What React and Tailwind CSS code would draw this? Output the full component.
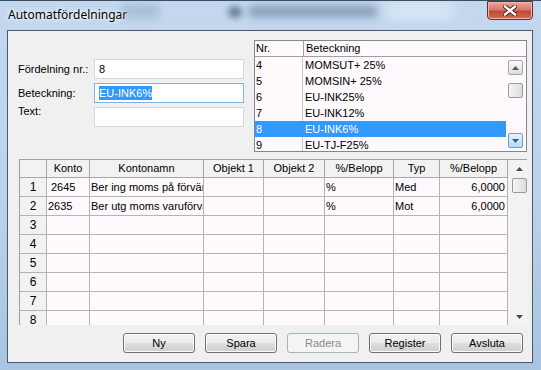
import React from 'react';

const listRows = [
  ['4', 'MOMSUT+ 25%'],
  ['5', 'MOMSIN+ 25%'],
  ['6', 'EU-INK25%'],
  ['7', 'EU-INK12%'],
  ['8', 'EU-INK6%'],
  ['9', 'EU-TJ-F25%'],
];

const colW = ['w-[27px]', 'w-[43px]', 'w-[114px]', 'w-[60px]', 'w-[61px]', 'w-[69px]', 'w-[46px]', 'w-[68px]'];
const headers = ['', 'Konto', 'Kontonamn', 'Objekt 1', 'Objekt 2', '%/Belopp', 'Typ', '%/Belopp'];

const gridRows = [
  ['1', '2645', 'Ber ing moms på förvärv EU', '', '', '%', 'Med', '6,0000'],
  ['2', '2635', 'Ber utg moms varuförvärv EU', '', '', '%', 'Mot', '6,0000'],
  ['3', '', '', '', '', '', '', ''],
  ['4', '', '', '', '', '', '', ''],
  ['5', '', '', '', '', '', '', ''],
  ['6', '', '', '', '', '', '', ''],
  ['7', '', '', '', '', '', '', ''],
  ['8', '', '', '', '', '', '', ''],
];

function ScrollBtn({ down, blue }) {
  return (
    <div
      className={`w-[15px] h-[15px] rounded-[2px] border flex items-center justify-center ${
        blue ? 'border-[#6d9ec7] bg-gradient-to-b from-[#e8f4fd] to-[#b7dbf5]' : 'border-[#a5a5a5] bg-gradient-to-b from-[#fbfbfb] to-[#dcdcdc]'
      }`}
    >
      <svg width="7" height="4" viewBox="0 0 7 4">
        <path d={down ? 'M0 0h7L3.5 4z' : 'M0 4h7L3.5 0z'} fill={blue ? '#2f5f8f' : '#555'} />
      </svg>
    </div>
  );
}

function Button({ children, disabled }) {
  return (
    <div
      className={`w-[72px] h-[20px] rounded-[3px] border flex items-center justify-center text-[11px] ${
        disabled
          ? 'border-[#adb2b5] bg-[#f4f4f4] text-[#8a8a8a]'
          : 'border-[#707070] bg-[linear-gradient(#f2f2f2_0%,#ebebeb_48%,#dddddd_52%,#cfcfcf_100%)] text-black shadow-[inset_0_0_0_1px_#fcfcfc]'
      }`}
    >
      {children}
    </div>
  );
}

export default function App() {
  return (
    <div className="w-[541px] h-[370px] relative overflow-hidden bg-gradient-to-b from-[#c3d8ee] via-[#bcd3ea] to-[#a9c4e0] font-['Liberation_Sans',Arial,sans-serif] text-black">
      {/* blurred glass background */}
      <div className="absolute left-[120px] top-[4px] w-[40px] h-[14px] rounded-full bg-[#7f97b3] opacity-40 blur-[5px]"></div>
      <div className="absolute left-[228px] top-[6px] w-[14px] h-[12px] rounded-full bg-[#314866] opacity-60 blur-[3px]"></div>
      <div className="absolute left-[248px] top-[6px] w-[130px] h-[11px] rounded-full bg-[#4b6484] opacity-50 blur-[4px]"></div>
      <div className="absolute left-[385px] top-[3px] w-[70px] h-[16px] rounded-full bg-[#e8f2fb] opacity-60 blur-[6px]"></div>
      <div className="absolute left-0 top-0 w-full h-[1px] bg-[#3d4d5f]"></div>

      {/* title bar */}
      <div className="h-[30px] flex items-start justify-between pl-[8px] pr-[8px]">
        <div className="pt-[8px] text-[12px] font-['Noto_Sans',sans-serif] leading-[14px] [text-shadow:0_0_6px_#ffffff,0_0_3px_#ffffff]">
          Automatfördelningar
        </div>
        <div className="mt-[1px] w-[46px] h-[19px] rounded-b-[4px] border border-[#6b2a22] bg-[linear-gradient(#e9a99b_0%,#d7786a_45%,#c04a36_55%,#d36a4f_100%)] flex items-center justify-center shadow-[inset_0_0_0_1px_#f0b8ab]">
          <svg width="14" height="11" viewBox="0 0 14 11">
            <path d="M2 1.5L12 9.5M12 1.5L2 9.5" stroke="#3b1a16" strokeWidth="4.2" strokeLinecap="square" />
            <path d="M2 1.5L12 9.5M12 1.5L2 9.5" stroke="#ffffff" strokeWidth="2.4" strokeLinecap="square" />
          </svg>
        </div>
      </div>

      {/* client area */}
      <div className="ml-[7px] w-[526px] h-[333px] border border-[#4a5a6c] bg-[#f0f0f0] flex flex-col pl-[11px] text-[11px]">
        {/* top section */}
        <div className="flex pt-[9px]">
          <div className="w-[235px] pt-[19px] flex flex-col gap-[4px]">
            <div className="flex items-center">
              <div className="w-[76px] -ml-[1px] pr-[1px]">Fördelning nr.:</div>
              <div className="w-[150px] h-[20px] border border-[#d8d8d8] bg-white flex items-center pl-[4px]">8</div>
            </div>
            <div className="flex items-center">
              <div className="w-[76px] -ml-[1px] pr-[1px]">Beteckning:</div>
              <div className="w-[150px] h-[20px] border border-[#7fb2e5] bg-white flex items-center pl-[4px]">
                <span className="bg-[#3399ff] text-white leading-[14px]">EU-INK6%</span>
              </div>
            </div>
            <div className="flex items-start">
              <div className="w-[76px] -ml-[1px] pr-[1px] -mt-[4px]">Text:</div>
              <div className="w-[150px] h-[20px] border border-[#d8d8d8] bg-white"></div>
            </div>
          </div>

          {/* list */}
          <div className="w-[273px] h-[112px] border border-[#828790] bg-[#fdf9fd] flex flex-col overflow-hidden">
            <div className="h-[16px] flex border-b border-[#a0a0a0] shrink-0">
              <div className="w-[49px] pl-[1px] border-r border-[#a0a0a0] leading-[15px]">Nr.</div>
              <div className="pl-[2px] leading-[15px]">Beteckning</div>
            </div>
            <div className="flex flex-1 overflow-hidden">
              <div className="w-[251px] flex flex-col">
                {listRows.map(([nr, name]) => {
                  const sel = nr === '8';
                  return (
                    <div
                      key={nr}
                      className={`h-[16px] shrink-0 flex items-center ${sel ? 'bg-[#3399ff] text-white' : ''}`}
                    >
                      <div className={`w-[48px] pl-[1px] h-full flex items-center border-r ${sel ? 'border-[#3399ff]' : 'border-[#c8c8c8]'}`}>{nr}</div>
                      <div className="pl-[2px]">{name}</div>
                    </div>
                  );
                })}
              </div>
              <div className="w-[15px] ml-[2px] pt-[3px] pb-[3px] flex flex-col">
                <ScrollBtn />
                <div className="mt-[8px] w-[15px] h-[15px] rounded-[2px] border border-[#9a9a9a] bg-gradient-to-r from-[#f4f4f4] to-[#dedede]"></div>
                <div className="flex-1"></div>
                <ScrollBtn down blue />
              </div>
            </div>
          </div>
        </div>

        {/* grid */}
        <div className="mt-[7px] w-[508px] h-[166px] flex border-t border-l border-[#a0a0a0] overflow-hidden">
          <div className="w-[488px] flex flex-col">
            <div className="h-[18px] flex shrink-0">
              {headers.map((h, i) => (
                <div key={i} className={`${colW[i]} shrink-0 h-full border-r border-b border-[#a8a8a8] bg-[#f2f2f2] flex items-center justify-center`}>
                  {h}
                </div>
              ))}
            </div>
            {gridRows.map((r) => (
              <div key={r[0]} className="h-[19px] flex shrink-0">
                {r.map((c, i) => (
                  <div
                    key={i}
                    className={`${colW[i]} shrink-0 h-full border-r border-b border-[#b4b4b4] flex items-center overflow-hidden whitespace-nowrap ${
                      i === 0
                        ? 'bg-[#f2f2f2] justify-center text-[12px]'
                        : i === 7
                        ? 'bg-[#fdf9fd] justify-end pr-[2px]'
                        : i === 1 && r[0] === '1'
                        ? 'bg-[#fdf9fd] pl-[4px]'
                        : 'bg-[#fdf9fd] pl-[1px]'
                    }`}
                  >
                    {c}
                  </div>
                ))}
              </div>
            ))}
          </div>
          <div className="w-[20px] bg-[#f3f3f3] flex flex-col items-end pr-[0px]">
            <div className="h-[18px] w-[15px] flex items-center justify-center">
              <svg width="7" height="4" viewBox="0 0 7 4"><path d="M0 4h7L3.5 0z" fill="#4a4a4a" /></svg>
            </div>
            <div className="w-[15px] h-[15px] rounded-[2px] border border-[#9a9a9a] bg-gradient-to-r from-[#f6f6f6] to-[#dcdcdc]"></div>
            <div className="flex-1"></div>
            <div className="h-[14px] w-[15px] flex items-start justify-center pt-[4px]">
              <svg width="7" height="4" viewBox="0 0 7 4"><path d="M0 0h7L3.5 4z" fill="#4a4a4a" /></svg>
            </div>
          </div>
        </div>

        {/* buttons */}
        <div className="mt-[8px] flex justify-end gap-[10px] pr-[9px]">
          <Button>Ny</Button>
          <Button>Spara</Button>
          <Button disabled>Radera</Button>
          <Button>Register</Button>
          <Button>Avsluta</Button>
        </div>
      </div>
    </div>
  );
}
